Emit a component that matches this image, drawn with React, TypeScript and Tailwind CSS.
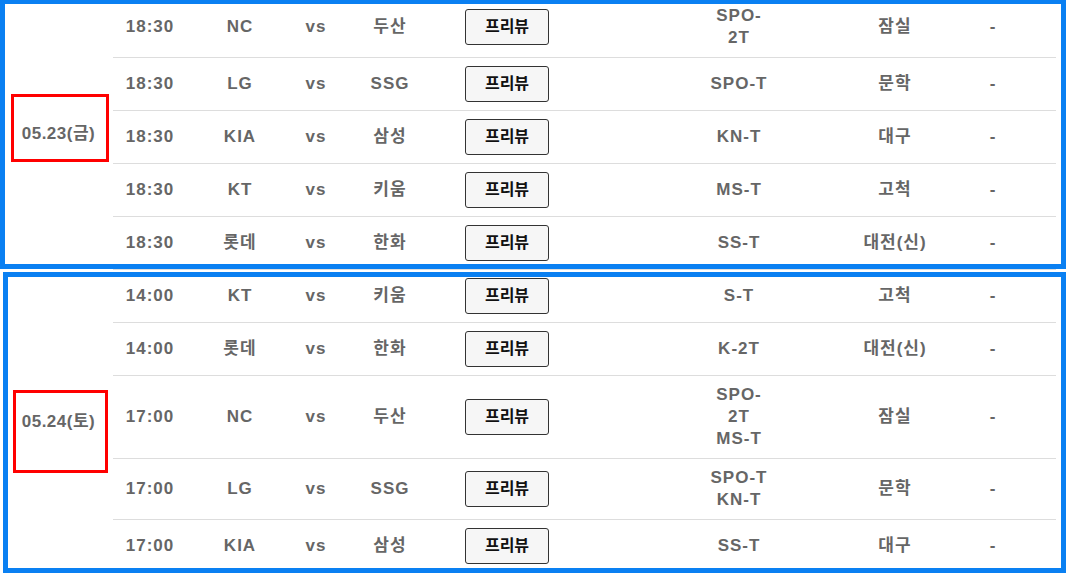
type Game = {
  time: string
  home: string
  away: string
  tv: string[]
  stadium: string
}

type Day = {
  date: string
  games: Game[]
}

const schedule: Day[] = [
  {
    date: '05.23(금)',
    games: [
      { time: '18:30', home: 'NC', away: '두산', tv: ['SPO-', '2T'], stadium: '잠실' },
      { time: '18:30', home: 'LG', away: 'SSG', tv: ['SPO-T'], stadium: '문학' },
      { time: '18:30', home: 'KIA', away: '삼성', tv: ['KN-T'], stadium: '대구' },
      { time: '18:30', home: 'KT', away: '키움', tv: ['MS-T'], stadium: '고척' },
      { time: '18:30', home: '롯데', away: '한화', tv: ['SS-T'], stadium: '대전(신)' },
    ],
  },
  {
    date: '05.24(토)',
    games: [
      { time: '14:00', home: 'KT', away: '키움', tv: ['S-T'], stadium: '고척' },
      { time: '14:00', home: '롯데', away: '한화', tv: ['K-2T'], stadium: '대전(신)' },
      { time: '17:00', home: 'NC', away: '두산', tv: ['SPO-', '2T', 'MS-T'], stadium: '잠실' },
      { time: '17:00', home: 'LG', away: 'SSG', tv: ['SPO-T', 'KN-T'], stadium: '문학' },
      { time: '17:00', home: 'KIA', away: '삼성', tv: ['SS-T'], stadium: '대구' },
    ],
  },
]

function GameRow({ game }: { game: Game }) {
  return (
    <div className="grid grid-cols-[74px_106px_46px_102px_177px_242px_70px_126px] items-center border-b border-[#dddddd] py-2 leading-[22px]">
      <div className="text-center">{game.time}</div>
      <div className="text-center">{game.home}</div>
      <div className="text-center">vs</div>
      <div className="text-center">{game.away}</div>
      <div className="pl-[24px]">
        <button className="flex h-[36px] w-[84px] items-center justify-center rounded-[3px] border border-[#333333] bg-[#f6f6f6] text-[16px] tracking-normal text-[#111111]">
          프리뷰
        </button>
      </div>
      <div className="text-center">
        {game.tv.map((line) => (
          <div key={line}>{line}</div>
        ))}
      </div>
      <div className="text-center">{game.stadium}</div>
      <div className="text-center">-</div>
    </div>
  )
}

export default function App() {
  return (
    <div className="relative h-[573px] w-[1066px] overflow-hidden bg-white font-['Liberation_Sans','Noto_Sans_CJK_KR',sans-serif] text-[17px] font-bold tracking-[1px] text-[#666666]">
      <div className="mt-[-3px] w-[1056px]">
        {schedule.map((day) => (
          <div key={day.date} className="flex">
            <div className="flex w-[113px] shrink-0 items-center justify-center pl-[4px] tracking-[0.5px]">
              {day.date}
            </div>
            <div className="flex-1">
              {day.games.map((game, i) => (
                <GameRow key={i} game={game} />
              ))}
            </div>
          </div>
        ))}
      </div>

      {/* annotation boxes */}
      <div className="absolute left-0 top-[-1px] h-[270px] w-[1066px] border-[5px] border-[#0a80f2]" />
      <div className="absolute left-[3px] top-[272px] h-[301px] w-[1063px] border-[5px] border-[#0a80f2]" />
      <div className="absolute left-[11px] top-[94px] h-[68px] w-[98px] border-[3px] border-[#ff0000]" />
      <div className="absolute left-[13px] top-[390px] h-[83px] w-[95px] border-[3px] border-[#ff0000]" />
    </div>
  )
}
